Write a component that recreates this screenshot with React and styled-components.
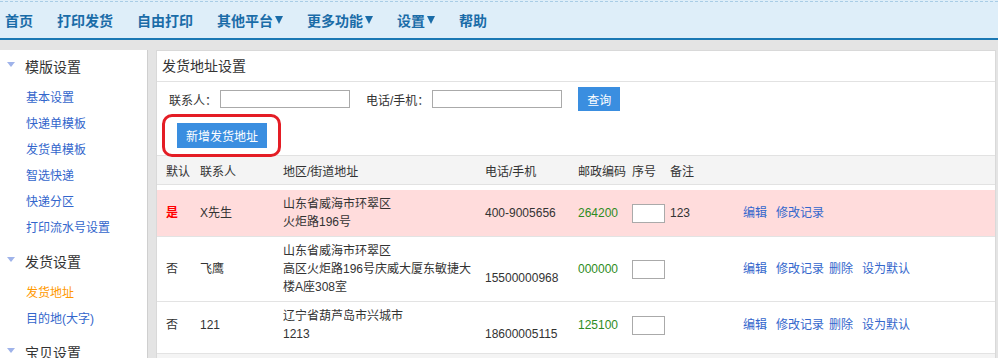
import React from 'react';
import styled, { createGlobalStyle } from 'styled-components';

const GlobalStyle = createGlobalStyle`
  body {
    margin: 0;
    background: #e4e4e4;
    font-family: "Liberation Sans", "Noto Sans CJK SC", sans-serif;
    font-size: 12px;
    color: #333;
  }
`;

const NavBar = styled.div`
  background: #deeef9;
  padding-top: 1px;
  border-bottom: 2px solid #1b78b4;
`;

const NavList = styled.ul`
  display: flex;
  align-items: center;
  height: 36px;
  margin: 0;
  padding: 0 0 0 5px;
  list-style: none;
  border-top: 1px dashed #a9cde6;
`;

const NavItem = styled.li`
  display: flex;
  align-items: center;
  margin-right: 24px;
  font-size: 14px;
  font-weight: bold;
  color: #1a6ca8;
  cursor: pointer;
`;

const Caret = styled.span`
  display: inline-block;
  width: 0;
  height: 0;
  margin-left: 2px;
  border-left: 4.5px solid transparent;
  border-right: 4.5px solid transparent;
  border-top: 8px solid #1a6ca8;
`;

const Main = styled.div`
  display: flex;
  gap: 8px;
  margin-top: 10px;
  padding-right: 2px;
`;

const Sidebar = styled.aside`
  width: 147px;
  min-height: 330px;
  padding-top: 1px;
  background: #fff;
  border-right: 1px solid #cfcfcf;
`;

const Group = styled.div`
  padding-bottom: 5px;
`;

const GroupTitle = styled.div`
  display: flex;
  align-items: center;
  height: 30px;
  padding-left: 7px;
  font-size: 14px;
  color: #333;
`;

const Arrow = styled.span`
  width: 0;
  height: 0;
  margin: 0 10px 4px 0;
  border-left: 4.5px solid transparent;
  border-right: 4.5px solid transparent;
  border-top: 5px solid #9fb3ea;
`;

const LinkList = styled.div`
  margin-top: 4px;
`;

const SideLink = styled.a`
  display: block;
  height: 26px;
  line-height: 26px;
  padding-left: 26px;
  color: ${(p) => (p.$active ? '#ff9900' : '#3366cc')};
  text-decoration: none;
  cursor: pointer;
`;

const Panel = styled.section`
  flex: 1;
  background: #fff;
  border: 1px solid #d9d9d9;
`;

const PanelTitle = styled.div`
  height: 30px;
  line-height: 30px;
  padding-left: 5px;
  font-size: 14px;
  border-bottom: 1px solid #e2e2e2;
`;

const SearchRow = styled.div`
  display: flex;
  align-items: center;
  height: 24px;
  margin-top: 5px;
  padding-left: 12px;
`;

const Label = styled.label`
  color: #333;
`;

const TextInput = styled.input`
  width: 128px;
  height: 16px;
  margin: 0 16px 0 3px;
  padding: 0;
  border: 1px solid #aaa;
`;

const Button = styled.button`
  height: ${(p) => p.$h}px;
  padding: 0 9px;
  border: none;
  background: #3a8ee0;
  color: #fff;
  font-family: inherit;
  font-size: 12px;
  cursor: pointer;
`;

const ButtonRow = styled.div`
  position: relative;
  margin-top: 12px;
  padding-left: 20px;
`;

const Highlight = styled.div`
  position: absolute;
  left: 5px;
  top: -9px;
  width: 119px;
  height: 43px;
  box-sizing: border-box;
  border: 3px solid #e41d25;
  border-radius: 10px;
  pointer-events: none;
`;

const columns = '34px 83px 202px 93px 54px 38px 73px 1fr';

const HeadRow = styled.div`
  display: grid;
  grid-template-columns: ${columns};
  align-items: center;
  height: 28px;
  margin-top: 7px;
  padding-left: 9px;
  background: #f4f4f4;
  border-top: 1px solid #e2e2e2;
  border-bottom: 1px solid #e2e2e2;
`;

const Body = styled.div`
  margin-top: 5px;
`;

const Row = styled.div`
  display: grid;
  grid-template-columns: ${columns};
  align-items: center;
  padding: 5px 0 ${(p) => p.$padBottom}px 9px;
  line-height: 18px;
  background: ${(p) => p.$bg};
  border-bottom: 1px solid #e3e3e3;
`;

const Flag = styled.span`
  color: ${(p) => (p.$yes ? '#f00' : '#333')};
  font-weight: ${(p) => (p.$yes ? 'bold' : 'normal')};
`;

const Lines = styled.div`
  display: flex;
  flex-direction: column;
`;

const Line = styled.span`
  height: 18px;
`;

const Zip = styled.span`
  color: #2e8b22;
`;

const SeqInput = styled.input`
  width: 31px;
  height: 17px;
  padding: 0;
  border: 1px solid #aaa;
`;

const Actions = styled.div`
  display: flex;
`;

const Action = styled.a`
  margin-right: ${(p) => p.$space}px;
  color: #3366cc;
  cursor: pointer;
`;

const Footer = styled.div`
  height: 20px;
  background: #f4f4f4;
`;

const navItems = [
  { label: '首页' },
  { label: '打印发货' },
  { label: '自由打印' },
  { label: '其他平台', menu: true },
  { label: '更多功能', menu: true },
  { label: '设置', menu: true },
  { label: '帮助' },
];

const groups = [
  {
    title: '模版设置',
    links: ['基本设置', '快递单模板', '发货单模板', '智选快递', '快递分区', '打印流水号设置'],
  },
  { title: '发货设置', links: ['发货地址', '目的地(大字)'], active: '发货地址' },
  { title: '宝贝设置', links: [] },
];

const rows = [
  {
    isDefault: true,
    name: 'X先生',
    address: ['山东省威海市环翠区', '火炬路196号'],
    phone: ['400-9005656'],
    zip: '264200',
    remark: '123',
    bg: '#ffdcdc',
    padBottom: 5,
  },
  {
    name: '飞鹰',
    address: ['山东省威海市环翠区', '高区火炬路196号庆威大厦东敏捷大', '楼A座308室'],
    phone: ['', '15500000968'],
    zip: '000000',
    bg: '#fff',
    padBottom: 5,
  },
  {
    name: '121',
    address: ['辽宁省葫芦岛市兴城市', '1213'],
    phone: ['', '18600005115'],
    zip: '125100',
    bg: '#fff',
    padBottom: 10,
  },
];

export default function App() {
  return (
    <>
      <GlobalStyle />
      <NavBar>
        <NavList>
          {navItems.map((n) => (
            <NavItem key={n.label}>
              {n.label}
              {n.menu && <Caret />}
            </NavItem>
          ))}
        </NavList>
      </NavBar>
      <Main>
        <Sidebar>
          {groups.map((g) => (
            <Group key={g.title}>
              <GroupTitle>
                <Arrow />
                {g.title}
              </GroupTitle>
              {g.links.length > 0 && (
                <LinkList>
                  {g.links.map((l) => (
                    <SideLink key={l} $active={l === g.active}>
                      {l}
                    </SideLink>
                  ))}
                </LinkList>
              )}
            </Group>
          ))}
        </Sidebar>
        <Panel>
          <PanelTitle>发货地址设置</PanelTitle>
          <SearchRow>
            <Label>联系人：</Label>
            <TextInput type="text" />
            <Label>电话/手机：</Label>
            <TextInput type="text" />
            <Button $h={24}>查询</Button>
          </SearchRow>
          <ButtonRow>
            <Button $h={25}>新增发货地址</Button>
            <Highlight />
          </ButtonRow>
          <HeadRow>
            <span>默认</span>
            <span>联系人</span>
            <span>地区/街道地址</span>
            <span>电话/手机</span>
            <span>邮政编码</span>
            <span>序号</span>
            <span>备注</span>
            <span />
          </HeadRow>
          <Body>
            {rows.map((r) => (
              <Row key={r.name} $bg={r.bg} $padBottom={r.padBottom}>
                <Flag $yes={r.isDefault}>{r.isDefault ? '是' : '否'}</Flag>
                <span>{r.name}</span>
                <Lines>
                  {r.address.map((a) => (
                    <Line key={a}>{a}</Line>
                  ))}
                </Lines>
                <Lines>
                  {r.phone.map((p, i) => (
                    <Line key={i}>{p}</Line>
                  ))}
                </Lines>
                <Zip>{r.zip}</Zip>
                <div>
                  <SeqInput type="text" />
                </div>
                <span>{r.remark}</span>
                <Actions>
                  <Action $space={9}>编辑</Action>
                  <Action $space={5}>修改记录</Action>
                  {!r.isDefault && (
                    <>
                      <Action $space={9}>删除</Action>
                      <Action $space={0}>设为默认</Action>
                    </>
                  )}
                </Actions>
              </Row>
            ))}
          </Body>
          <Footer />
        </Panel>
      </Main>
    </>
  );
}
